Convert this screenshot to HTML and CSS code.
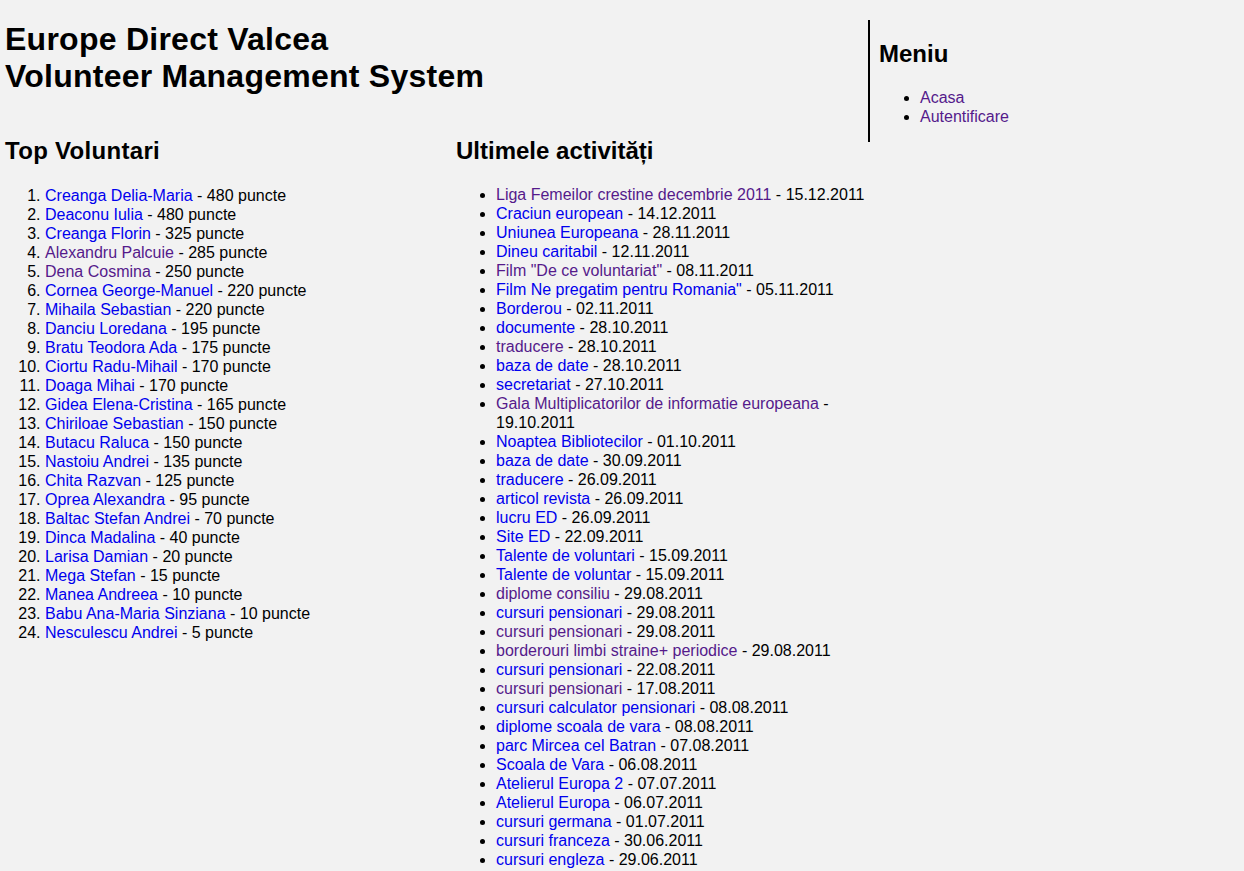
FILE: index.html
```html
<!DOCTYPE html>
<html lang="ro">
<head>
<meta charset="utf-8">
<title>Europe Direct Valcea - Volunteer Management System</title>
<link rel="stylesheet" href="styles.css">
</head>
<body>
<div class="page">
  <div class="main">
    <h1 class="title">Europe Direct Valcea<br>Volunteer Management System</h1>
    <div class="columns">
      <div class="col col-top">
        <h2>Top Voluntari</h2>
        <ol class="list">
          <li><a href="#">Creanga Delia-Maria</a> - 480 puncte</li>
          <li><a href="#">Deaconu Iulia</a> - 480 puncte</li>
          <li><a href="#">Creanga Florin</a> - 325 puncte</li>
          <li><a class="visited" href="#">Alexandru Palcuie</a> - 285 puncte</li>
          <li><a class="visited" href="#">Dena Cosmina</a> - 250 puncte</li>
          <li><a href="#">Cornea George-Manuel</a> - 220 puncte</li>
          <li><a href="#">Mihaila Sebastian</a> - 220 puncte</li>
          <li><a href="#">Danciu Loredana</a> - 195 puncte</li>
          <li><a href="#">Bratu Teodora Ada</a> - 175 puncte</li>
          <li><a href="#">Ciortu Radu-Mihail</a> - 170 puncte</li>
          <li><a href="#">Doaga Mihai</a> - 170 puncte</li>
          <li><a href="#">Gidea Elena-Cristina</a> - 165 puncte</li>
          <li><a href="#">Chiriloae Sebastian</a> - 150 puncte</li>
          <li><a href="#">Butacu Raluca</a> - 150 puncte</li>
          <li><a href="#">Nastoiu Andrei</a> - 135 puncte</li>
          <li><a href="#">Chita Razvan</a> - 125 puncte</li>
          <li><a href="#">Oprea Alexandra</a> - 95 puncte</li>
          <li><a href="#">Baltac Stefan Andrei</a> - 70 puncte</li>
          <li><a href="#">Dinca Madalina</a> - 40 puncte</li>
          <li><a href="#">Larisa Damian</a> - 20 puncte</li>
          <li><a href="#">Mega Stefan</a> - 15 puncte</li>
          <li><a href="#">Manea Andreea</a> - 10 puncte</li>
          <li><a href="#">Babu Ana-Maria Sinziana</a> - 10 puncte</li>
          <li><a href="#">Nesculescu Andrei</a> - 5 puncte</li>
        </ol>
      </div>
      <div class="col col-act">
        <h2>Ultimele activități</h2>
        <ul class="list">
          <li><a class="visited" href="#">Liga Femeilor crestine decembrie 2011</a> - 15.12.2011</li>
          <li><a href="#">Craciun european</a> - 14.12.2011</li>
          <li><a href="#">Uniunea Europeana</a> - 28.11.2011</li>
          <li><a href="#">Dineu caritabil</a> - 12.11.2011</li>
          <li><a class="visited" href="#">Film "De ce voluntariat"</a> - 08.11.2011</li>
          <li><a href="#">Film Ne pregatim pentru Romania"</a> - 05.11.2011</li>
          <li><a href="#">Borderou</a> - 02.11.2011</li>
          <li><a href="#">documente</a> - 28.10.2011</li>
          <li><a class="visited" href="#">traducere</a> - 28.10.2011</li>
          <li><a href="#">baza de date</a> - 28.10.2011</li>
          <li><a href="#">secretariat</a> - 27.10.2011</li>
          <li><a class="visited" href="#">Gala Multiplicatorilor de informatie europeana</a> - 19.10.2011</li>
          <li><a href="#">Noaptea Bibliotecilor</a> - 01.10.2011</li>
          <li><a href="#">baza de date</a> - 30.09.2011</li>
          <li><a href="#">traducere</a> - 26.09.2011</li>
          <li><a href="#">articol revista</a> - 26.09.2011</li>
          <li><a href="#">lucru ED</a> - 26.09.2011</li>
          <li><a href="#">Site ED</a> - 22.09.2011</li>
          <li><a href="#">Talente de voluntari</a> - 15.09.2011</li>
          <li><a href="#">Talente de voluntar</a> - 15.09.2011</li>
          <li><a class="visited" href="#">diplome consiliu</a> - 29.08.2011</li>
          <li><a href="#">cursuri pensionari</a> - 29.08.2011</li>
          <li><a class="visited" href="#">cursuri pensionari</a> - 29.08.2011</li>
          <li><a class="visited" href="#">borderouri limbi straine+ periodice</a> - 29.08.2011</li>
          <li><a href="#">cursuri pensionari</a> - 22.08.2011</li>
          <li><a class="visited" href="#">cursuri pensionari</a> - 17.08.2011</li>
          <li><a href="#">cursuri calculator pensionari</a> - 08.08.2011</li>
          <li><a href="#">diplome scoala de vara</a> - 08.08.2011</li>
          <li><a href="#">parc Mircea cel Batran</a> - 07.08.2011</li>
          <li><a href="#">Scoala de Vara</a> - 06.08.2011</li>
          <li><a href="#">Atelierul Europa 2</a> - 07.07.2011</li>
          <li><a href="#">Atelierul Europa</a> - 06.07.2011</li>
          <li><a href="#">cursuri germana</a> - 01.07.2011</li>
          <li><a href="#">cursuri franceza</a> - 30.06.2011</li>
          <li><a href="#">cursuri engleza</a> - 29.06.2011</li>
        </ul>
      </div>
    </div>
  </div>
  <div class="sidebar">
    <h2>Meniu</h2>
    <ul class="list">
      <li><a class="visited" href="#">Acasa</a></li>
      <li><a class="visited" href="#">Autentificare</a></li>
    </ul>
  </div>
</div>
</body>
</html>
```

FILE: styles.css
```css
html, body {
  margin: 0;
  padding: 0;
  background: #f2f2f2;
}

body {
  font-family: "Liberation Sans", Arial, sans-serif;
  font-size: 16px;
  color: #000;
}

.page {
  display: flex;
  align-items: flex-start;
  padding: 0 5px;
}

.main {
  width: 863px;
  flex: none;
}

.title {
  font-size: 32px;
  font-weight: bold;
  line-height: 37px;
  letter-spacing: 0.25px;
  margin: 21px 0 22px;
}

.columns {
  display: grid;
  grid-template-columns: 451px 1fr;
}

h2 {
  font-size: 24px;
  font-weight: bold;
  margin: 20px 0;
  line-height: 28px;
}

.col h2 {
  margin-top: 20px;
  margin-bottom: 21px;
}

.col-top h2 {
  letter-spacing: 0.3px;
}

.list {
  margin: 0 0 16px;
  padding-left: 40px;
  line-height: 19px;
}

.col-act .list {
  margin-top: -1px;
}

a {
  color: #0000ee;
  text-decoration: none;
}

a.visited {
  color: #551a8b;
}

.sidebar {
  flex: 1;
  margin-top: 20px;
  border-left: 2px solid #000;
  padding-left: 10px;
}

.sidebar h2 {
  margin-left: -1px;
}

.sidebar .list {
  margin-top: 0;
  padding-left: 40px;
}
```
